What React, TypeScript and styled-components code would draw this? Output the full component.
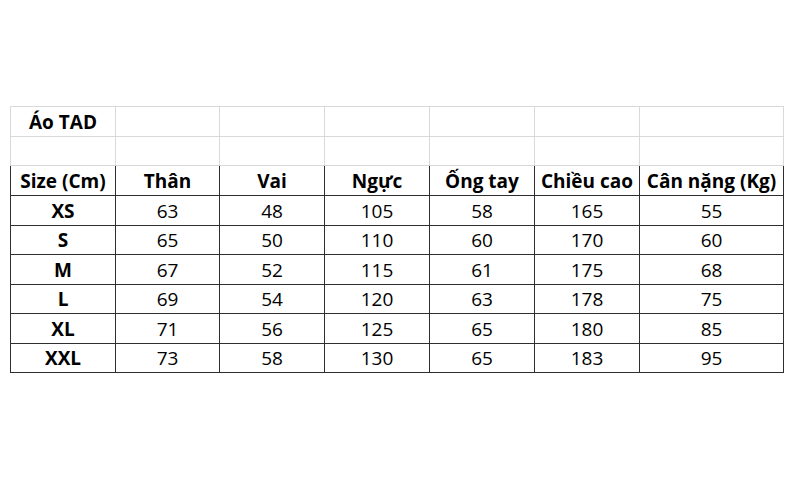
import React from "react"
import styled, { createGlobalStyle } from "styled-components"

const GlobalStyle = createGlobalStyle`
    html, body {
        margin: 0;
        padding: 0;
        background: #ffffff;
    }
`

const Page = styled.div`
    width: 800px;
    height: 497px;
    box-sizing: border-box;
    padding: 106px 0 0 10px;
    background: #ffffff;
    font-family: "Open Sans", "Noto Sans", sans-serif;
    font-size: 19px;
    color: #000000;
`

const Sheet = styled.table`
    border-collapse: collapse;
    table-layout: fixed;
    width: 773px;
`

const Row = styled.tr<{ $h: number }>`
    height: ${p => p.$h}px;
`

const Cell = styled.td<{ $bold?: boolean; $grid?: boolean }>`
    box-sizing: border-box;
    padding: 2px 0 0 0;
    line-height: 1;
    text-align: center;
    vertical-align: middle;
    white-space: nowrap;
    font-weight: ${p => (p.$bold ? 700 : 400)};
    border: 1px solid ${p => (p.$grid ? "#d9d9d9" : "#2e2e2e")};
`

const widths = [105, 104, 105, 105, 105, 105, 144]

const headers = ["Size (Cm)", "Thân", "Vai", "Ngực", "Ống tay", "Chiều cao", "Cân nặng (Kg)"]

const rows: [string, number, number, number, number, number, number][] = [
    ["XS", 63, 48, 105, 58, 165, 55],
    ["S", 65, 50, 110, 60, 170, 60],
    ["M", 67, 52, 115, 61, 175, 68],
    ["L", 69, 54, 120, 63, 178, 75],
    ["XL", 71, 56, 125, 65, 180, 85],
    ["XXL", 73, 58, 130, 65, 183, 95]
]

const rowHeights = [30, 29, 30, 29.5, 29.5, 29.5, 29.5, 29.5, 29.5]

const App: React.FC = () => {
    return (
        <Page>
            <GlobalStyle />
            <Sheet>
                <colgroup>
                    {widths.map((w, i) => (
                        <col key={i} style={{ width: w }} />
                    ))}
                </colgroup>
                <tbody>
                    <Row $h={rowHeights[0]}>
                        <Cell $grid $bold>Áo TAD</Cell>
                        {widths.slice(1).map((_, i) => (
                            <Cell $grid key={i} />
                        ))}
                    </Row>
                    <Row $h={rowHeights[1]}>
                        {widths.map((_, i) => (
                            <Cell $grid key={i} />
                        ))}
                    </Row>
                    <Row $h={rowHeights[2]}>
                        {headers.map(h => (
                            <Cell $bold key={h}>{h}</Cell>
                        ))}
                    </Row>
                    {rows.map((r, ri) => (
                        <Row $h={rowHeights[ri + 3]} key={r[0]}>
                            {r.map((v, i) => (
                                <Cell $bold={i === 0} key={i}>{v}</Cell>
                            ))}
                        </Row>
                    ))}
                </tbody>
            </Sheet>
        </Page>
    )
}

export default App
